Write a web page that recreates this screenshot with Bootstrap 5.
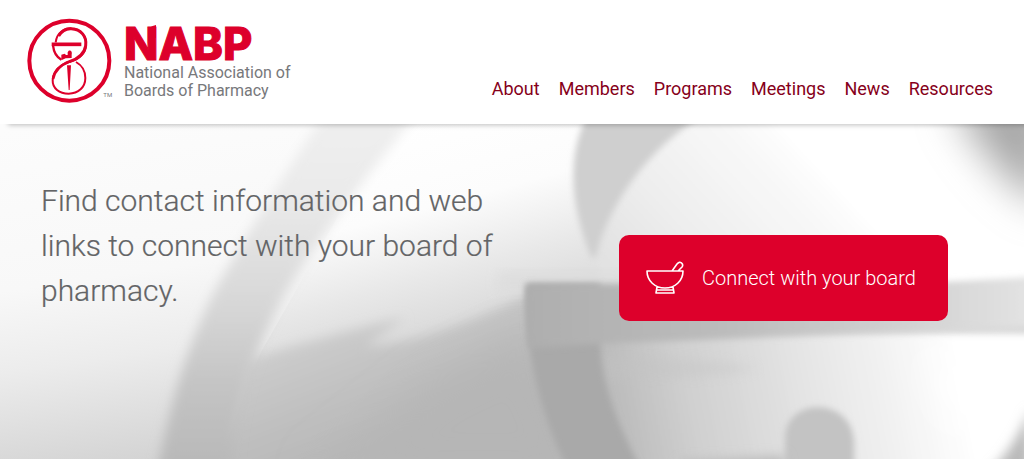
<!DOCTYPE html>
<html lang="en">
<head>
<meta charset="utf-8">
<meta name="viewport" content="width=device-width, initial-scale=1">
<title>NABP</title>
<link rel="stylesheet" href="https://cdn.jsdelivr.net/npm/bootstrap@5.3.0/dist/css/bootstrap.min.css">
<style>
:root { --nabp-red: #dd002b; --nabp-wine: #86001a; --nabp-gray: #636466; }
body { font-family: Roboto, "Liberation Sans", sans-serif; }
.site-header { padding: 16px 31px 20px 26px; box-shadow: 8px 1px 5px rgba(0,0,0,.26); z-index: 2; }
.brand-mark { width: 88px; height: 88px; flex: none; }
.brand-name { font: 800 45px/40px Inter, Roboto, sans-serif; color: var(--nabp-red); -webkit-text-stroke: 1px; }
.brand-line { font-size: 16px; line-height: 18px; color: #77787b; }
.brand-copy { margin-left: 10px; padding-top: 8px; }
.flag { left: 24px; top: 0; width: 8px; height: 16px; }
.site-nav { gap: 19px; padding-bottom: 3px; }
.site-nav .nav-link { padding: 0; font-size: 18px; line-height: 24px; color: var(--nabp-wine); }
.hero { padding: 54px 41px; }
.hero-art { z-index: 0; }
.hero-copy { font-size: 30px; line-height: 45px; font-weight: 300; color: var(--nabp-gray); -webkit-text-stroke: .2px; }
.hero-row { z-index: 1; }
.btn-board { width: 329px; max-width: 100%; height: 86px; margin-top: 57px; padding: 0 27px; gap: 18px; border-radius: 10px; background: var(--nabp-red); color: #fff; font-size: 20px; font-weight: 300; }
.btn-board:hover { background: #c40026; color: #fff; }
@media (min-width: 768px) { .hero-action { padding-left: 72px; } }
</style>
</head>
<body class="min-vh-100 d-flex flex-column">
<header class="site-header bg-white position-relative d-flex flex-wrap justify-content-between align-items-end">
  <a href="#" class="d-flex text-decoration-none" aria-label="NABP home">
    <svg class="brand-mark" viewBox="18 18 264 264" aria-hidden="true">
      <circle cx="148" cy="152" r="120" fill="none" stroke="#dd002b" stroke-width="12"/>
      <g fill="none" stroke="#dd002b">
        <path d="M107 97C111 66 134 55 152 55C182 56 200 79 198 106C196 132 178 145 155 153C125 162 100 180 98 210C97 235 118 251 146 251C175 251 196 232 196 204C196 182 186 166 168 156" stroke-width="6"/>
        <path d="M116 78C126 61 140 55 154 56C183 57 201 80 197 107C193 134 172 147 148 155" stroke-width="9"/>
        <path d="M99 106C101 125 108 140 124 149" stroke-width="7"/>
        <path d="M150 154C124 164 104 180 99 207" stroke-width="8"/>
        <path d="M95 103H184" stroke-width="11"/>
      </g>
      <path fill="#dd002b" d="M146 122C154 120 157 126 155 134V144L137 145L124 151V134L134 131L138 135H143V127ZM141 166H153L149 240H146Z"/>
      <text x="250" y="262" font-family="Roboto, sans-serif" font-size="18" fill="#77787b">TM</text>
    </svg>
    <span class="brand-copy d-flex flex-column">
      <span class="brand-name position-relative">NABP<svg class="flag position-absolute" viewBox="0 0 8 16" aria-hidden="true"><path d="M0 9C0 4 3 2 8 1V14H0Z" fill="#dd002b"/></svg></span>
      <span class="brand-line">National Association of</span>
      <span class="brand-line">Boards of Pharmacy</span>
    </span>
  </a>
  <nav class="site-nav nav" aria-label="Main">
    <a class="nav-link" href="#">About</a>
    <a class="nav-link" href="#">Members</a>
    <a class="nav-link" href="#">Programs</a>
    <a class="nav-link" href="#">Meetings</a>
    <a class="nav-link" href="#">News</a>
    <a class="nav-link" href="#">Resources</a>
  </nav>
</header>
<main class="hero flex-grow-1 position-relative overflow-hidden">
  <svg class="hero-art position-absolute top-0 start-0 w-100 h-100" viewBox="0 0 1024 335" preserveAspectRatio="none" aria-hidden="true">
    <defs>
      <filter id="soft3" x="-20%" y="-20%" width="140%" height="140%"><feGaussianBlur stdDeviation="3"/></filter>
      <filter id="soft5" x="-20%" y="-20%" width="140%" height="140%"><feGaussianBlur stdDeviation="6"/></filter>
      <filter id="soft20" x="-50%" y="-50%" width="200%" height="200%"><feGaussianBlur stdDeviation="20"/></filter>
      <linearGradient id="base" gradientUnits="userSpaceOnUse" x1="50" y1="0" x2="100" y2="350"><stop offset="0" stop-color="#fcfcfc"/><stop offset=".45" stop-color="#f8f8f8"/><stop offset=".68" stop-color="#ececec"/><stop offset="1" stop-color="#d2d2d2"/></linearGradient>
      <linearGradient id="mid" gradientUnits="userSpaceOnUse" x1="380" y1="0" x2="460" y2="300"><stop offset="0" stop-color="#fff"/><stop offset=".3" stop-color="#fcfcfc"/><stop offset=".52" stop-color="#e8e8e8"/><stop offset=".72" stop-color="#d8d8d8"/><stop offset="1" stop-color="#b8b8b8"/></linearGradient>
      <linearGradient id="wedge" gradientUnits="userSpaceOnUse" x1="350" y1="190" x2="400" y2="320"><stop offset="0" stop-color="#cecece"/><stop offset=".45" stop-color="#c2c2c2"/><stop offset="1" stop-color="#b6b6b6"/></linearGradient>
      <linearGradient id="band" x1="0" y1="0" x2="0" y2="1"><stop offset="0" stop-color="#f0f0f0"/><stop offset=".25" stop-color="#eaeaea"/><stop offset=".55" stop-color="#d6d6d6"/><stop offset=".75" stop-color="#c4c4c4"/><stop offset="1" stop-color="#b6b6b6"/></linearGradient>
      <linearGradient id="upper" gradientUnits="userSpaceOnUse" x1="640" y1="170" x2="800" y2="20"><stop offset="0" stop-color="#e2e2e2"/><stop offset=".4" stop-color="#efefef"/><stop offset=".85" stop-color="#f9f9f9"/><stop offset="1" stop-color="#fff"/></linearGradient>
      <linearGradient id="lower" gradientUnits="userSpaceOnUse" x1="600" y1="310" x2="960" y2="240"><stop offset="0" stop-color="#b6b6b6"/><stop offset=".25" stop-color="#cfcfcf"/><stop offset=".55" stop-color="#e3e3e3"/><stop offset=".8" stop-color="#f2f2f2"/><stop offset="1" stop-color="#fff"/></linearGradient>
      <linearGradient id="bar" gradientUnits="userSpaceOnUse" x1="525" y1="0" x2="1024" y2="0"><stop offset="0" stop-color="#aeaeae"/><stop offset=".4" stop-color="#bcbcbc"/><stop offset=".83" stop-color="#d6d6d6"/><stop offset="1" stop-color="#e2e2e2"/></linearGradient>
    </defs>
    <path fill="url(#base)" d="M0 0H1024V335H0Z"/>
    <path fill="url(#mid)" d="M390 0H640V335H220L260 230Z"/>
    <path fill="url(#wedge)" filter="url(#soft5)" d="M245 237C300 220 345 207 405 194L365 222C410 222 470 200 550 160V350H220Z"/>
    <path fill="#b6b6b6" filter="url(#soft20)" d="M310 355L430 260L530 212L590 355Z"/>
    <path fill="url(#band)" filter="url(#soft5)" d="M330 -20C285 50 240 120 213 170C184 230 170 280 156 355H232C235 300 246 245 272 195C296 140 365 55 425 -20Z"/>
    <path fill="url(#upper)" filter="url(#soft3)" d="M690 -10H1034V164H603C580 90 645 35 690 -10Z"/>
    <path fill="#ddd" filter="url(#soft5)" opacity=".8" d="M498 148H625V170H498Z"/>
    <path fill="url(#lower)" filter="url(#soft3)" d="M585 210H1034V345H630Z"/>
    <path fill="#c3c3c3" opacity=".4" filter="url(#soft5)" d="M600 230C650 237 705 233 760 245C690 258 640 250 606 258Z"/>
    <path fill="#fff" filter="url(#soft20)" d="M1030 70L820 10L930 120L1030 175ZM930 235H1040V300H960Z"/>
    <path fill="#cfcfcf" filter="url(#soft3)" d="M588 -10C564 35 573 88 590 130Q594 139 597 129C610 77 653 20 705 -10Z"/>
    <path fill="#a9a9a9" filter="url(#soft3)" d="M526 160H600V220C603 271 621 305 642 348H569C541 292 524 228 526 160Z"/>
    <path fill="url(#bar)" filter="url(#soft3)" d="M526 160L944 158L1034 153V202L750 214L594 220L528 224Z"/>
    <path fill="#a6a6a6" filter="url(#soft20)" d="M965 -35H1050V85Q990 50 955 -20Z"/>
    <path fill="#c3c3c3" filter="url(#soft3)" d="M785 350V314C785 272 854 272 854 320V350Z"/>
    <path fill="#b9b9b9" filter="url(#soft5)" d="M680 350V338L785 332V350ZM987 350Q1014 326 1030 285V350Z"/>
  </svg>
  <div class="hero-row row g-0 position-relative">
    <div class="col-md-6"><p class="hero-copy mb-0">Find contact information and web links to connect with your board of pharmacy.</p></div>
    <div class="hero-action col-md-6 d-flex justify-content-center align-items-start">
      <button type="button" class="btn btn-board border-0 d-flex align-items-center">
        <svg width="38" height="34" viewBox="0 0 38 34" fill="none" stroke="#fff" stroke-width="1.6" stroke-linejoin="round" aria-hidden="true">
          <path d="M1 10H37C37 20 29 27 19 27S1 20 1 10ZM11 26L10 32H28L27 26M10 29H28M26 10L31 3C34 -1 38 3 36 6L32 10"/>
        </svg>
        <span>Connect with your board</span>
      </button>
    </div>
  </div>
</main>
<script src="https://cdn.jsdelivr.net/npm/bootstrap@5.3.0/dist/js/bootstrap.bundle.min.js"></script>
</body>
</html>
